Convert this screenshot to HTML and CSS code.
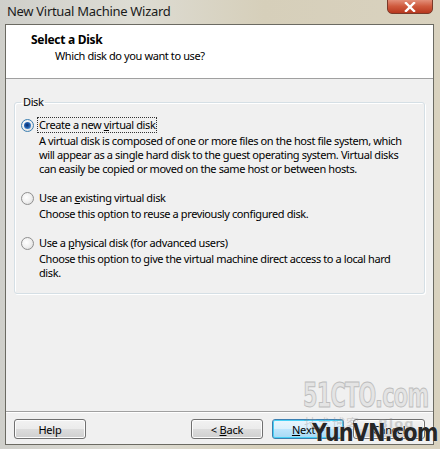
FILE: index.html
```html
<!DOCTYPE html>
<html lang="en">
<head>
  <meta charset="UTF-8" />
  <title>New Virtual Machine Wizard</title>
  <link rel="stylesheet" href="styles.css">
</head>
<body>

<div class="window">
  <div class="titlebar">
    <span class="title">New Virtual Machine Wizard</span>
    <span class="close">
      <svg width="12" height="10" viewBox="0 0 12 10">
        <path d="M2 1 L10 9 M10 1 L2 9" stroke="#fff" stroke-width="2.4" stroke-linecap="square" />
      </svg>
    </span>
  </div>

  <div class="client">
    <div class="header">
      <div class="header-title">Select a Disk</div>
      <div class="header-sub">Which disk do you want to use?</div>
    </div>

    <div class="content">
      <fieldset class="group">
        <legend>Disk</legend>

        <div class="option">
          <div class="radio-row">
            <span class="radio checked"></span>
            <span class="label focused">Create a new <u>v</u>irtual disk</span>
          </div>
          <p class="desc">A virtual disk is composed of one or more files on the host file system, which<br>will appear as a single hard disk to the guest operating system. Virtual disks<br>can easily be copied or moved on the same host or between hosts.</p>
        </div>

        <div class="option">
          <div class="radio-row">
            <span class="radio"></span>
            <span class="label">Use an <u>e</u>xisting virtual disk</span>
          </div>
          <p class="desc">Choose this option to reuse a previously configured disk.</p>
        </div>

        <div class="option">
          <div class="radio-row">
            <span class="radio"></span>
            <span class="label">Use a <u>p</u>hysical disk (for advanced users)</span>
          </div>
          <p class="desc">Choose this option to give the virtual machine direct access to a local hard<br>disk.</p>
        </div>
      </fieldset>
    </div>

    <div class="footer">
      <button class="btn">Help</button>
      <div class="spacer"></div>
      <button class="btn">&lt; <u>B</u>ack</button>
      <button class="btn default"><u>N</u>ext &gt;</button>
      <button class="btn">Cancel</button>
    </div>
  </div>

  <div class="mark mark-site">51CTO.com</div>
  <div class="mark mark-blog">技术博客 <span class="blog">Blog</span></div>
  <div class="mark mark-yun">YunVN.com</div>
</div>

</body>
</html>
```

FILE: styles.css
```css
body {
  margin: 0;
  font-family: 'Noto Sans', sans-serif;
  font-size: 11px;
  letter-spacing: -0.4px;
  color: #000;
  background-color: #d9d5c8;
}

.window {
  position: relative;
  width: 440px;
  height: 449px;
  overflow: hidden;
  background: linear-gradient(90deg, #cfcfca 0%, #dddcd4 30%, #d6cfba 60%, #d9d2bf 100%);
}

.titlebar {
  height: 24px;
  display: flex;
  justify-content: space-between;
  align-items: flex-start;
  padding-left: 7px;
  padding-right: 7px;
}

.title {
  font-size: 13px;
  letter-spacing: -0.3px;
  line-height: 22px;
  color: #1a1a1a;
}

.close {
  width: 46px;
  height: 17px;
  margin-top: -3px;
  border: 1px solid #7a3a2a;
  border-radius: 0 0 5px 5px;
  background: linear-gradient(#e9a08c, #cf5a3e 55%, #b8381f);
  display: flex;
  justify-content: center;
  align-items: center;
  padding-top: 2px;
  box-sizing: border-box;
}

.client {
  margin-left: 5px;
  margin-right: 6px;
  height: 419px;
  border: 1px solid #6b6a62;
  background-color: #f0f0f0;
  display: flex;
  flex-direction: column;
}

.header {
  height: 54px;
  flex-shrink: 0;
  background-color: #fff;
  border-bottom: 1px solid #a0a0a0;
  padding-left: 25px;
  padding-top: 7px;
  box-sizing: border-box;
}

.header-title {
  font-weight: bold;
  font-size: 12px;
  letter-spacing: -0.3px;
  line-height: 16px;
}

.header-sub {
  padding-left: 24px;
  line-height: 15px;
}

.content {
  flex: 1;
  padding: 16px 8px 0 8px;
}

.group {
  margin: 0;
  padding: 8px 0 8px 6px;
  height: 199px;
  box-sizing: border-box;
  border: 1px solid #d5dfe5;
  border-radius: 3px;
  box-shadow: inset 1px 1px 0 #fff, 1px 1px 0 #fff;
}

.group legend {
  padding: 0 2px;
  line-height: 14px;
}

.option {
  margin-bottom: 14px;
}

.radio-row {
  display: flex;
  align-items: center;
  gap: 3px;
  height: 16px;
}

.radio {
  width: 11px;
  height: 11px;
  border: 1px solid #8f8f8f;
  border-radius: 50%;
  background: radial-gradient(circle at 40% 40%, #fff 0%, #f0f0f0 50%, #d2d2d2 100%);
  box-sizing: content-box;
  position: relative;
}

.radio.checked {
  border-color: #3c7fb1;
}

.radio.checked::after {
  content: "";
  position: absolute;
  left: 2px;
  top: 2px;
  width: 7px;
  height: 7px;
  border-radius: 50%;
  background: radial-gradient(circle at 45% 45%, #0d2a6a 0%, #1f5fad 45%, #6ab0e8 100%);
}

.label {
  padding: 0 1px;
  line-height: 14px;
  border: 1px dotted transparent;
}

.label.focused {
  border-color: #333;
}

.desc {
  margin: 1px 0 0 18px;
  line-height: 14px;
}

.footer {
  height: 33px;
  flex-shrink: 0;
  box-sizing: border-box;
  border-top: 1px solid #a0a0a0;
  box-shadow: inset 0 1px 0 #fff;
  display: flex;
  align-items: flex-start;
  padding: 7px 8px 0 8px;
  gap: 9px;
}

.spacer {
  flex: 1;
}

.btn {
  width: 72px;
  height: 20px;
  font-family: inherit;
  font-size: 11px;
  letter-spacing: -0.2px;
  color: #000;
  padding: 0;
  border: 1px solid #707070;
  border-radius: 3px;
  background: linear-gradient(#f2f2f2 0%, #ebebeb 49%, #dddddd 50%, #cfcfcf 100%);
  box-shadow: inset 0 0 0 1px #fcfcfc;
}

.btn.default {
  border-color: #3c7fb1;
  background: linear-gradient(#eaf6fd 0%, #d9f0fc 49%, #bee6fd 50%, #a7d9f5 100%);
  box-shadow: inset 0 0 0 1px #48d0f5;
}

.mark {
  position: absolute;
  white-space: nowrap;
  transform-origin: left top;
}

.mark-site {
  left: 303px;
  top: 376px;
  font-family: 'DejaVu Sans Condensed', 'DejaVu Sans', sans-serif;
  font-weight: bold;
  font-size: 33px;
  letter-spacing: -1px;
  transform: scaleX(0.7);
  color: #e4e4e4;
  -webkit-text-stroke: 1px #bdbdbd;
}

.mark-blog {
  left: 304px;
  top: 413px;
  font-family: 'Noto Sans CJK SC', sans-serif;
  font-size: 13px;
  letter-spacing: 1px;
  color: rgba(140, 140, 140, 0.35);
}

.mark-blog .blog {
  margin-left: 14px;
  font-family: 'DejaVu Sans', sans-serif;
  font-weight: bold;
}

.mark-yun {
  left: 312px;
  top: 419px;
  font-family: 'DejaVu Sans', sans-serif;
  font-weight: bold;
  font-size: 24px;
  letter-spacing: -1px;
  transform: scaleX(0.87);
  color: #262626;
  text-shadow: 0 0 1px #fff;
}
```
